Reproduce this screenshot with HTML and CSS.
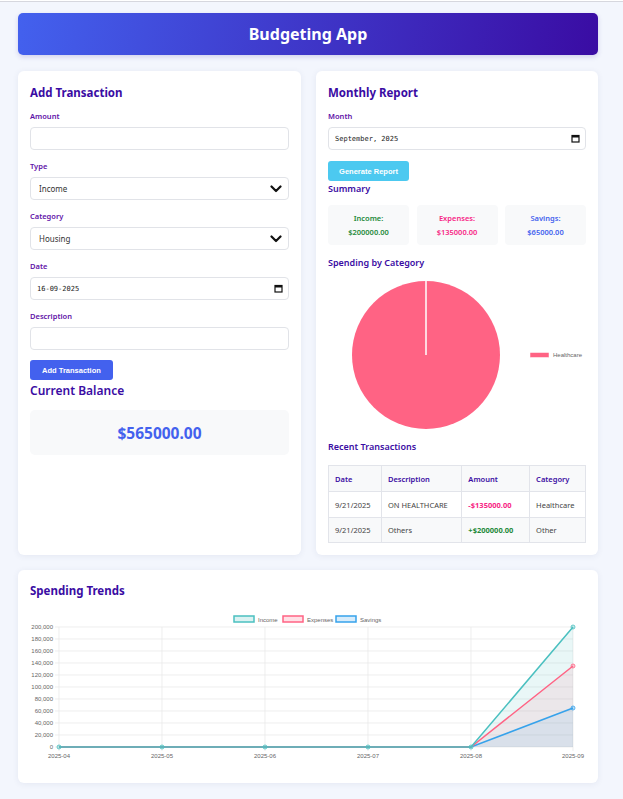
FILE: index.html
```html
<!DOCTYPE html>
<html lang="en">
<head>
<meta charset="utf-8">
<title>Budgeting App</title>
<link rel="stylesheet" href="styles.css">
</head>
<body>
<div class="topline"></div>
<div class="page">
  <header class="app-header"><h1>Budgeting App</h1></header>

  <div class="columns">
    <section class="card">
      <h2 class="card-title">Add Transaction</h2>
      <div class="field">
        <label class="label">Amount</label>
        <input class="input" type="text">
      </div>
      <div class="field">
        <label class="label">Type</label>
        <div class="select-wrap">
          <select class="input select"><option>Income</option></select>
          <svg class="chevron" width="12" height="8" viewBox="0 0 12 8"><path d="M1.5 1.5 L6 6 L10.5 1.5" fill="none" stroke="#111" stroke-width="2.2" stroke-linecap="round" stroke-linejoin="round"/></svg>
        </div>
      </div>
      <div class="field">
        <label class="label">Category</label>
        <div class="select-wrap">
          <select class="input select"><option>Housing</option></select>
          <svg class="chevron" width="12" height="8" viewBox="0 0 12 8"><path d="M1.5 1.5 L6 6 L10.5 1.5" fill="none" stroke="#111" stroke-width="2.2" stroke-linecap="round" stroke-linejoin="round"/></svg>
        </div>
      </div>
      <div class="field">
        <label class="label">Date</label>
        <div class="select-wrap">
          <input class="input mono" type="text" value="16-09-2025">
          <svg class="cal" width="9" height="9" viewBox="0 0 9 9"><rect x="1" y="1.5" width="7" height="6.5" fill="none" stroke="#111" stroke-width="1.2"/><rect x="1" y="1.5" width="7" height="2" fill="#111"/></svg>
        </div>
      </div>
      <div class="field">
        <label class="label">Description</label>
        <input class="input" type="text">
      </div>
      <button class="btn btn-primary">Add Transaction</button>
      <h2 class="card-title balance-title">Current Balance</h2>
      <div class="balance">$565000.00</div>
    </section>

    <section class="card">
      <h2 class="card-title">Monthly Report</h2>
      <div class="field">
        <label class="label">Month</label>
        <div class="select-wrap">
          <input class="input mono" type="text" value="September, 2025">
          <svg class="cal" width="9" height="9" viewBox="0 0 9 9"><rect x="1" y="1.5" width="7" height="6.5" fill="none" stroke="#111" stroke-width="1.2"/><rect x="1" y="1.5" width="7" height="2" fill="#111"/></svg>
        </div>
      </div>
      <button class="btn btn-info">Generate Report</button>
      <h3 class="sub-title summary-title">Summary</h3>
      <div class="summary">
        <div class="sum-box income"><div>Income:</div><div>$200000.00</div></div>
        <div class="sum-box expense"><div>Expenses:</div><div>$135000.00</div></div>
        <div class="sum-box savings"><div>Savings:</div><div>$65000.00</div></div>
      </div>
      <h3 class="sub-title cat-title">Spending by Category</h3>
      <svg class="pie" width="258" height="160" viewBox="0 0 258 160">
        <circle cx="98" cy="80" r="74" fill="#ff6384"/>
        <line x1="98" y1="6" x2="98" y2="80" stroke="#fff" stroke-width="1.5"/>
        <rect x="202" y="77.5" width="19" height="5" fill="#ff6384" stroke="#fff" stroke-width="0.5"/>
        <text x="225" y="82" class="chart-text">Healthcare</text>
      </svg>
      <h3 class="sub-title recent-title">Recent Transactions</h3>
      <table class="tx">
        <thead>
          <tr><th class="c1">Date</th><th class="c2">Description</th><th class="c3">Amount</th><th class="c4">Category</th></tr>
        </thead>
        <tbody>
          <tr><td>9/21/2025</td><td>ON HEALTHCARE</td><td class="neg">-$135000.00</td><td>Healthcare</td></tr>
          <tr class="alt"><td>9/21/2025</td><td>Others</td><td class="pos">+$200000.00</td><td>Other</td></tr>
        </tbody>
      </table>
    </section>
  </div>

  <section class="card trends">
    <h2 class="card-title">Spending Trends</h2>
    <svg class="trend" width="556" height="160" viewBox="0 0 556 160">
      <g class="legend">
        <rect x="204" y="5" width="20" height="6" fill="rgba(75,192,192,0.2)" stroke="rgb(75,192,192)" stroke-width="1.5"/>
        <text x="228" y="10.5" class="chart-text">Income</text>
        <rect x="253" y="5" width="20" height="6" fill="rgba(255,99,132,0.2)" stroke="rgb(255,99,132)" stroke-width="1.5"/>
        <text x="277" y="10.5" class="chart-text">Expenses</text>
        <rect x="306" y="5" width="20" height="6" fill="rgba(54,162,235,0.2)" stroke="rgb(54,162,235)" stroke-width="1.5"/>
        <text x="330" y="10.5" class="chart-text">Savings</text>
      </g>
      <g stroke="#e6e6e6" stroke-width="0.7">
        <line x1="25" y1="16" x2="543" y2="16"/>
        <line x1="25" y1="28" x2="543" y2="28"/>
        <line x1="25" y1="40" x2="543" y2="40"/>
        <line x1="25" y1="52" x2="543" y2="52"/>
        <line x1="25" y1="64" x2="543" y2="64"/>
        <line x1="25" y1="76" x2="543" y2="76"/>
        <line x1="25" y1="88" x2="543" y2="88"/>
        <line x1="25" y1="100" x2="543" y2="100"/>
        <line x1="25" y1="112" x2="543" y2="112"/>
        <line x1="25" y1="124" x2="543" y2="124"/>
        <line x1="25" y1="136" x2="543" y2="136"/>
        <line x1="29" y1="16" x2="29" y2="140"/>
        <line x1="132" y1="16" x2="132" y2="140"/>
        <line x1="235" y1="16" x2="235" y2="140"/>
        <line x1="338" y1="16" x2="338" y2="140"/>
        <line x1="441" y1="16" x2="441" y2="140"/>
        <line x1="543" y1="16" x2="543" y2="140"/>
      </g>
      <g class="chart-text" text-anchor="end">
        <text x="23" y="18">200,000</text>
        <text x="23" y="30">180,000</text>
        <text x="23" y="42">160,000</text>
        <text x="23" y="54">140,000</text>
        <text x="23" y="66">120,000</text>
        <text x="23" y="78">100,000</text>
        <text x="23" y="90">80,000</text>
        <text x="23" y="102">60,000</text>
        <text x="23" y="114">40,000</text>
        <text x="23" y="126">20,000</text>
        <text x="23" y="138">0</text>
      </g>
      <g class="chart-text" text-anchor="middle">
        <text x="29" y="147">2025-04</text>
        <text x="132" y="147">2025-05</text>
        <text x="235" y="147">2025-06</text>
        <text x="338" y="147">2025-07</text>
        <text x="441" y="147">2025-08</text>
        <text x="543" y="147">2025-09</text>
      </g>
      <polygon points="29,136 441,136 543,16 543,136" fill="rgba(75,192,192,0.12)"/>
      <polygon points="441,136 543,55 543,136" fill="rgba(255,99,132,0.1)"/>
      <polygon points="441,136 543,97 543,136" fill="rgba(54,162,235,0.1)"/>
      <polyline points="29,136 132,136 235,136 338,136 441,136 543,97" fill="none" stroke="rgb(54,162,235)" stroke-width="1.5"/>
      <polyline points="29,136 132,136 235,136 338,136 441,136 543,55" fill="none" stroke="rgb(255,99,132)" stroke-width="1.5"/>
      <polyline points="29,136 132,136 235,136 338,136 441,136 543,16" fill="none" stroke="rgb(75,192,192)" stroke-width="1.5"/>
      <g fill="rgba(54,162,235,0.3)" stroke="rgb(54,162,235)" stroke-width="0.8">
        <circle cx="543" cy="97" r="2"/>
      </g>
      <g fill="rgba(255,99,132,0.3)" stroke="rgb(255,99,132)" stroke-width="0.8">
        <circle cx="543" cy="55" r="2"/>
      </g>
      <g fill="rgba(75,192,192,0.3)" stroke="rgb(75,192,192)" stroke-width="0.8">
        <circle cx="29" cy="136" r="2"/>
        <circle cx="132" cy="136" r="2"/>
        <circle cx="235" cy="136" r="2"/>
        <circle cx="338" cy="136" r="2"/>
        <circle cx="441" cy="136" r="2"/>
        <circle cx="543" cy="16" r="2"/>
      </g>
    </svg>
  </section>
</div>
</body>
</html>
```
FILE: styles.css
```css
* { box-sizing: border-box; }
html, body { margin: 0; padding: 0; }
body {
  background: #f3f6fd;
  font-family: "Noto Sans", "Open Sans", sans-serif;
  color: #333;
}
.topline {
  height: 2px;
  background: #fff;
  border-bottom: 1px solid #d6d7de;
}
.page {
  padding: 11px 25px 16px 18px;
}
.app-header {
  height: 42px;
  border-radius: 5px;
  background: linear-gradient(100deg, #4361ee 0%, #3a0ca3 100%);
  box-shadow: 0 2px 5px rgba(60, 40, 160, 0.18);
  display: flex;
  align-items: center;
  justify-content: center;
}
.app-header h1 {
  margin: 0;
  color: #fff;
  font-size: 16px;
  font-weight: 700;
  line-height: 20px;
}
.columns {
  margin-top: 16px;
  display: grid;
  grid-template-columns: 283px 282px;
  gap: 15px;
}
.card {
  background: #fff;
  border-radius: 6px;
  box-shadow: 0 1px 6px rgba(50, 60, 120, 0.08);
  padding: 14px 12px 12px;
  display: flex;
  flex-direction: column;
}
.card-title {
  margin: 0;
  font-size: 11.5px;
  line-height: 16px;
  font-weight: 700;
  color: #3a0ca3;
}
.field {
  margin-top: 10px;
  display: flex;
  flex-direction: column;
}
.field + .field { margin-top: 11px; }
.label {
  font-size: 7.5px;
  line-height: 10px;
  font-weight: 600;
  color: #5f12a8;
  margin-bottom: 6px;
}
.input {
  display: block;
  height: 23px;
  width: 100%;
  border: 1px solid #e1e3e8;
  border-radius: 4px;
  background: #fff;
  padding: 0 8px;
  font-family: "Noto Sans", sans-serif;
  font-size: 8px;
  color: #333;
  outline: none;
  margin: 0;
}
.select { appearance: none; -webkit-appearance: none; }
.mono {
  font-family: "DejaVu Sans Mono", "Liberation Mono", monospace;
  font-size: 7px;
  color: #222;
  padding-left: 6px;
}
.select-wrap { position: relative; }
.chevron { position: absolute; right: 7px; top: 8px; }
.cal { position: absolute; right: 6px; top: 7px; }
.btn {
  display: block;
  align-self: flex-start;
  border: 0;
  border-radius: 3px;
  height: 20px;
  color: #fff;
  font-family: "Liberation Sans", Arial, sans-serif;
  font-weight: 700;
  font-size: 7.5px;
  margin-top: 10px;
  padding: 0;
}
.btn-primary { background: #4361ee; width: 83px; }
.btn-info { background: #4cc9f0; width: 81px; margin-top: 11px; }
.balance-title { margin-top: 3px; font-weight: 600; font-size: 12px; }
.balance {
  margin-top: 11px;
  height: 45px;
  background: #f8f9fa;
  border-radius: 5px;
  display: flex;
  align-items: center;
  justify-content: center;
  font-size: 15.5px;
  font-weight: 700;
  color: #4361ee;
}
.sub-title {
  margin: 0;
  font-size: 9px;
  line-height: 12px;
  font-weight: 600;
  color: #3a0ca3;
}
.summary-title { margin-top: 2px; }
.summary {
  margin-top: 10px;
  display: grid;
  grid-template-columns: 1fr 1fr 1fr;
  gap: 7.5px;
}
.sum-box {
  height: 40px;
  background: #f8f9fa;
  border-radius: 4px;
  display: flex;
  flex-direction: column;
  align-items: center;
  justify-content: center;
  gap: 2px;
  font-size: 7.5px;
  line-height: 12px;
  font-weight: 600;
}
.income { color: #1f8a3b; }
.expense { color: #f72585; }
.savings { color: #4361ee; }
.cat-title { margin-top: 12px; }
.pie { margin-top: 6px; display: block; }
.recent-title { margin-top: 6px; }
.chart-text {
  font-family: "Liberation Sans", Arial, sans-serif;
  font-size: 6px;
  fill: #666;
}
.tx {
  margin-top: 12px;
  width: 258px;
  border-collapse: collapse;
  font-size: 7.5px;
  color: #444;
}
.tx th, .tx td {
  border: 1px solid #e2e4ea;
  text-align: left;
  padding: 0 6px;
}
.tx th {
  height: 26px;
  background: #f8f9fa;
  color: #3a0ca3;
  font-weight: 600;
}
.tx td { height: 26px; }
.tx tr.alt td { height: 25px; background: #f8f9fa; }
.tx .c1 { width: 53px; }
.tx .c2 { width: 81px; }
.tx .c3 { width: 68px; }
.tx .c4 { width: 56px; }
.neg { color: #f72585; font-weight: 700; }
.pos { color: #1f8a3b; font-weight: 700; }
.trends { margin-top: 15px; padding-top: 13px; }
.trend { display: block; margin-top: 12px; }
```
